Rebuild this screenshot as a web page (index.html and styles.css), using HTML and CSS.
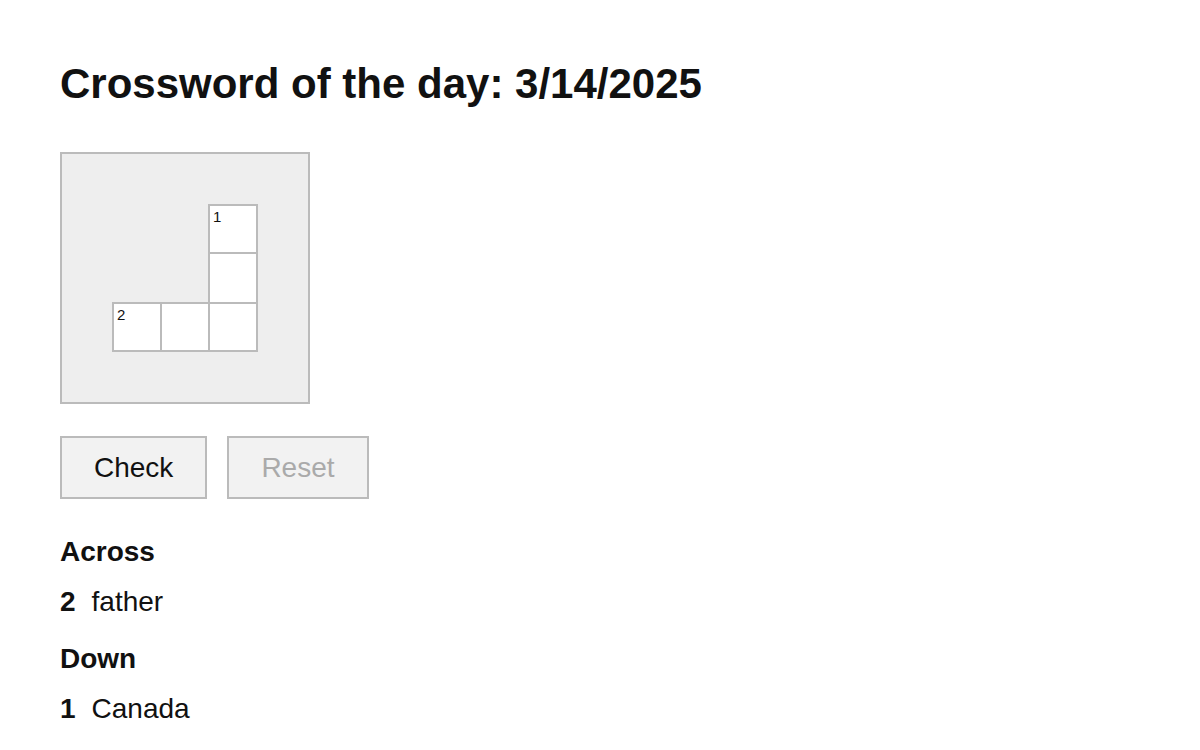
FILE: index.html
```html
<!DOCTYPE html>
<html lang="en">
<head>
    <meta charset="UTF-8">
    <meta name="viewport" content="width=device-width, initial-scale=1.0">
    <title>Crossword of the day</title>
    <link rel="stylesheet" href="styles.css">
</head>
<body>
    <div class="page">
        <h1>Crossword of the day: 3/14/2025</h1>

        <div class="board">
            <div class="grid">
                <div class="blank"></div>
                <div class="blank"></div>
                <div class="cell"><span class="num">1</span></div>
                <div class="blank"></div>
                <div class="blank"></div>
                <div class="cell tall"></div>
                <div class="cell"><span class="num">2</span></div>
                <div class="cell"></div>
                <div class="cell"></div>
            </div>
        </div>

        <div class="actions">
            <button class="btn">Check</button>
            <button class="btn" disabled>Reset</button>
        </div>

        <div class="clues">
            <h3>Across</h3>
            <div class="clue"><b>2</b><span>father</span></div>
            <h3>Down</h3>
            <div class="clue"><b>1</b><span>Canada</span></div>
        </div>
    </div>
</body>
</html>
```

FILE: styles.css
```css
body {
    margin: 0;
    font-family: "Liberation Sans", Arial, Helvetica, sans-serif;
    color: #111;
    background: #fff;
}

.page {
    padding: 58px 60px 0;
}

h1 {
    font-size: 42px;
    line-height: 52px;
    margin: 0 0 42px;
}

.board {
    display: inline-block;
    background: #eee;
    border: 2px solid #bbb;
    padding: 50px 52px 52px 50px;
}

.grid {
    display: grid;
    grid-template-columns: repeat(3, 48px);
    grid-template-rows: 48px 50px 48px;
}

.cell {
    position: relative;
    width: 50px;
    height: 50px;
    box-sizing: border-box;
    background: #fff;
    border: 2px solid #bbb;
}

.cell.tall {
    height: 52px;
}

.num {
    position: absolute;
    top: 3px;
    left: 3px;
    font-size: 15px;
    line-height: 15px;
}

.actions {
    display: flex;
    gap: 20px;
    margin-top: 32px;
}

.btn {
    height: 63px;
    padding: 0 32px;
    font-family: inherit;
    font-size: 28px;
    color: #111;
    background: #f2f2f2;
    border: 2px solid #bbb;
}

.btn:disabled {
    color: #aaa;
}

.clues {
    margin-top: 33px;
}

.clues h3 {
    font-size: 28px;
    line-height: 40px;
    margin: 0 0 10px;
}

.clue {
    font-size: 28px;
    line-height: 40px;
    margin-bottom: 17px;
}

.clue b {
    margin-right: 16px;
}
```
